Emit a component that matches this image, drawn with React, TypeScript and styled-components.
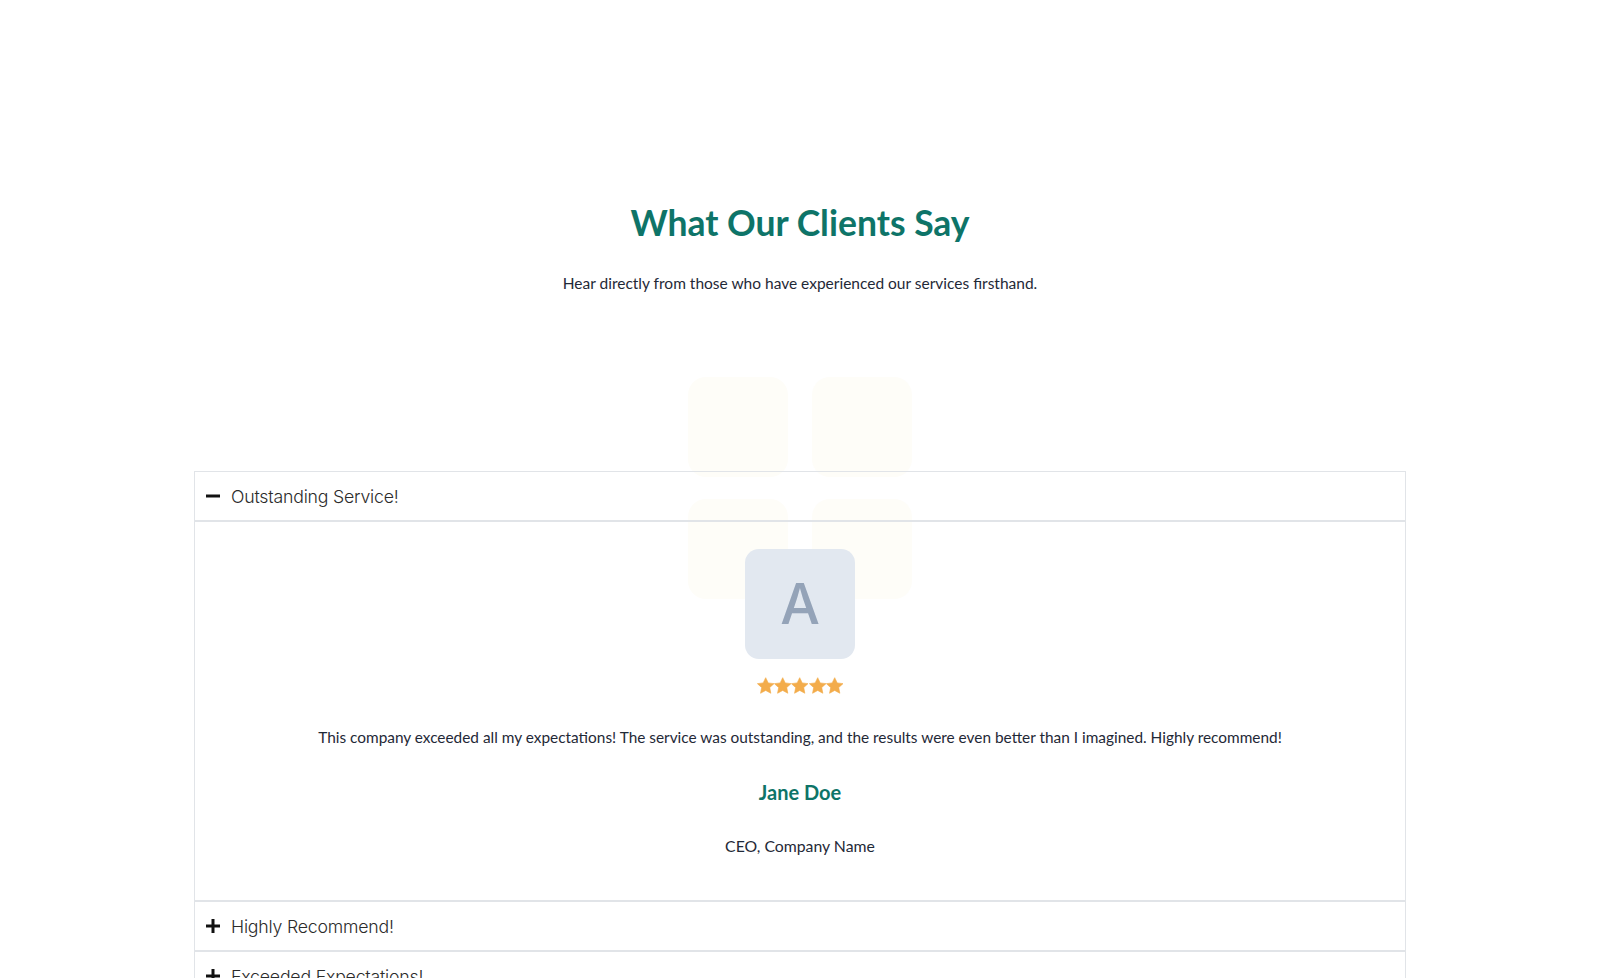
import React, { useState } from "react";
import styled, { createGlobalStyle } from "styled-components";

const Global = createGlobalStyle`
  html, body { margin: 0; padding: 0; background: #ffffff; }
  body { font-family: "Lato", "Inter", sans-serif; color: #1f2937; }
  * { box-sizing: border-box; }
`;

const Section = styled.section`
  display: flex;
  flex-direction: column;
  align-items: center;
  padding-top: 199px;
`;

const Title = styled.h2`
  margin: 0;
  font-family: "Lato", sans-serif;
  font-weight: 700;
  font-size: 35.5px;
  line-height: 48px;
  color: #0e7468;
  letter-spacing: 0;
`;

const Subtitle = styled.p`
  margin: 24px 0 0;
  font-size: 15.5px;
  line-height: 24px;
  color: #1f2937;
`;

const Stage = styled.div`
  position: relative;
  width: 1212px;
  margin-top: 176px;
`;

const Deco = styled.div`
  position: absolute;
  left: 50%;
  top: -94px;
  transform: translateX(-50%);
  display: grid;
  grid-template-columns: 100px 100px;
  grid-auto-rows: 100px;
  gap: 22px 24px;
  z-index: 0;
  pointer-events: none;
`;

const DecoTile = styled.div`
  border-radius: 18px;
  background: #fefdf8;
`;

const Accordion = styled.div`
  position: relative;
  z-index: 1;
  border: 1px solid #e1e4e8;
  border-bottom: none;
`;

const Item = styled.div`
  border-bottom: 2px solid #e1e4e8;
`;

const Header = styled.button`
  all: unset;
  box-sizing: border-box;
  width: 100%;
  height: 48px;
  display: flex;
  align-items: center;
  gap: 10px;
  padding: 0 0 0 10px;
  cursor: pointer;
  font-family: "Inter", sans-serif;
  font-weight: 300;
  font-size: 17.7px;
  color: #2b2b2b;
  letter-spacing: -0.2px;
`;

const Panel = styled.div`
  border-top: 2px solid #e1e4e8;
  display: flex;
  flex-direction: column;
  align-items: center;
  padding: 27px 0 42px;
`;

const Avatar = styled.div`
  width: 110px;
  height: 110px;
  border-radius: 14px;
  background: #e2e8f0;
  color: #94a3b8;
  display: flex;
  align-items: center;
  justify-content: center;
  font-family: "Inter", "Liberation Sans", sans-serif;
  font-size: 56px;
  font-weight: 500;
`;

const Stars = styled.div`
  display: flex;
  margin-top: 18px;
  height: 18px;
`;

const Quote = styled.p`
  margin: 30px 0 0;
  font-size: 15.4px;
  line-height: 24px;
  color: #1f2937;
  text-align: center;
`;

const Name = styled.h3`
  margin: 30px 0 0;
  font-family: "Lato", sans-serif;
  font-size: 20px;
  line-height: 26px;
  font-weight: 700;
  color: #0e7468;
`;

const Role = styled.p`
  margin: 29px 0 0;
  font-size: 15.8px;
  line-height: 24px;
  color: #1f2937;
`;

const Star = () => (
  <svg width="17.4" height="18" viewBox="1 1 22 22">
    <path
      d="M12 1.5l3.2 6.6 7.3.9-5.4 5 1.4 7.2L12 17.6l-6.5 3.6 1.4-7.2-5.4-5 7.3-.9z"
      fill="#f3ac4b"
      stroke="#f3ac4b"
      strokeWidth="0.8"
      strokeLinejoin="round"
    />
  </svg>
);

const Sign = ({ open }: { open: boolean }) => (
  <svg width="16" height="16" viewBox="0 0 16 16">
    <path d="M1 8h14" stroke="#111" strokeWidth="3" />
    {!open && <path d="M8 1v14" stroke="#111" strokeWidth="3" />}
  </svg>
);

const items = [
  {
    title: "Outstanding Service!",
    letter: "A",
    quote:
      "This company exceeded all my expectations! The service was outstanding, and the results were even better than I imagined. Highly recommend!",
    name: "Jane Doe",
    role: "CEO, Company Name",
  },
  {
    title: "Highly Recommend!",
    letter: "B",
    quote:
      "Professional, responsive and genuinely invested in our success. I would not hesitate to work with them again.",
    name: "John Smith",
    role: "Founder, Startup Inc.",
  },
  {
    title: "Exceeded Expectations!",
    letter: "C",
    quote:
      "From start to finish the team delivered quality work on time and beyond what we asked for.",
    name: "Emily Brown",
    role: "Marketing Director, Brand Co.",
  },
];

export default function App() {
  const [open, setOpen] = useState(0);
  return (
    <>
      <Global />
      <Section>
        <Title>What Our Clients Say</Title>
        <Subtitle>Hear directly from those who have experienced our services firsthand.</Subtitle>
        <Stage>
          <Deco>
            <DecoTile />
            <DecoTile />
            <DecoTile />
            <DecoTile />
          </Deco>
          <Accordion>
            {items.map((it, i) => (
              <Item key={it.title}>
                <Header onClick={() => setOpen(open === i ? -1 : i)}>
                  <Sign open={open === i} />
                  {it.title}
                </Header>
                {open === i && (
                  <Panel>
                    <Avatar>{it.letter}</Avatar>
                    <Stars>
                      {[0, 1, 2, 3, 4].map((s) => (
                        <Star key={s} />
                      ))}
                    </Stars>
                    <Quote>{it.quote}</Quote>
                    <Name>{it.name}</Name>
                    <Role>{it.role}</Role>
                  </Panel>
                )}
              </Item>
            ))}
          </Accordion>
        </Stage>
      </Section>
    </>
  );
}
